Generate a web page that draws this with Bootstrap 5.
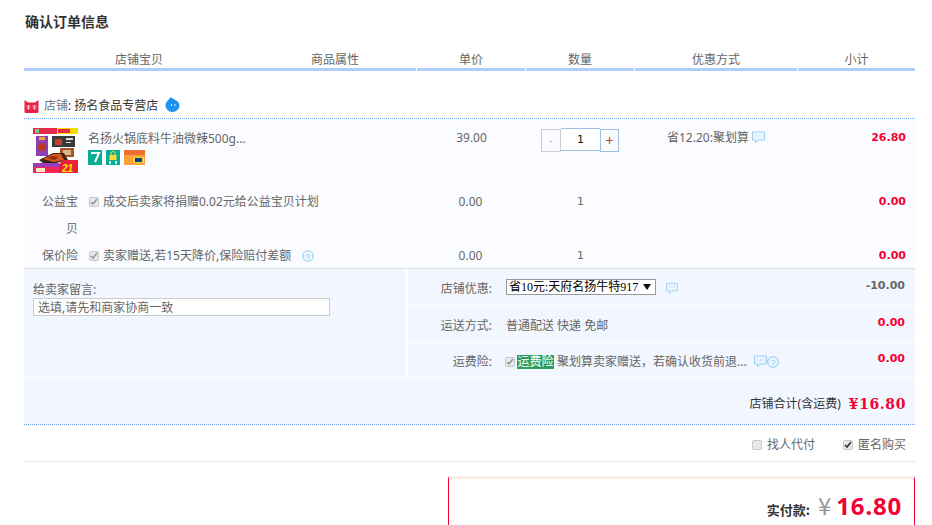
<!DOCTYPE html>
<html lang="zh-CN">
<head>
<meta charset="utf-8">
<title>确认订单信息</title>
<link rel="stylesheet" href="https://cdn.jsdelivr.net/npm/bootstrap@5.3.0/dist/css/bootstrap.min.css">
<style>
html,body{height:525px;overflow:hidden}
body{background:#fff;font-family:"Noto Sans","Noto Sans CJK SC",sans-serif;font-size:12px;line-height:18px;color:#666}
.page-wrap{width:891px;margin-left:24px}
.page-title{font-size:14px;font-weight:700;color:#333;line-height:20px;margin:11px 0 0 1px;font-family:"Noto Sans CJK SC",sans-serif}
.head-row{margin-top:20px;height:20px}
.head-cell{height:20px;line-height:17px;text-align:center;border-bottom:3px solid #aecdfa;margin-right:1px}
.c-item{width:392px}.c-price{width:108px}.c-qty{width:108px}.c-promo{width:162px}.c-sum{width:117px;margin-right:0}
.hi-a{width:230px;display:block}.hi-b{width:162px;display:block}
.shop-row{height:48px;padding-top:24px;border-bottom:1px dotted #6cb0f5;color:#333;line-height:21px}
.shop-cat{flex:none;margin-top:5px}
.shop-drop{flex:none;margin:2px 0 0 7px}
.shop-name{margin-left:5px}
.goods-area{background:#fbfcff;height:149px}
.goods-row{height:67px;border-bottom:1px solid #fff}
.thumb-cell{padding:9px 0 0 9px;width:64px;flex:none}
.goods-info{padding-top:11px;width:329px}
.badge-line{margin-top:2px;gap:4px}
.mid-text{padding-top:10px;text-align:center;width:109px}
.num-cell{padding-top:9px;text-align:center;width:109px}
.promo-cell{width:163px;padding:10px 0 0 32px}
.sum-text{padding:10px 9px 0 0;text-align:right;font:700 11px/18px "DejaVu Sans",sans-serif;color:#f40034}
.stepper{width:78px;margin-left:15px}
.step-btn{width:20px;height:23px;margin-top:1px;border:1px solid #ccc;text-align:center;line-height:21px;color:#bbb}
.step-plus{border-color:#9cc0e4;color:#a0522d;font-size:14px;width:19px}
.step-input{width:39px;height:23px;border:1px solid #9cc0e4;border-width:1px 0;text-align:center;color:#111;line-height:21px;background:#fff;font-family:"DejaVu Sans",sans-serif;font-size:11px}
.svc-row1,.svc-row2{padding-top:2px}
.svc-row1{height:54px}.svc-row2{height:27px}
.svc-label{width:54px;text-align:right;flex:none;line-height:27px;padding-left:16px}
.svc-row2 .svc-label{padding-left:0}
.svc-body{width:338px;padding-left:11px;line-height:27px}
.svc-num{line-height:27px;text-align:center;width:109px}
.svc-qty{padding-left:2px;font-family:"DejaVu Sans",sans-serif;font-size:11px}
.svc-gap{width:163px}
.svc-sum{line-height:27px;text-align:right;padding-right:9px;font:700 11px/27px "DejaVu Sans",sans-serif;color:#f40034}
.mini-check{appearance:none;-webkit-appearance:none;display:inline-block;width:10px;height:10px;margin:0 4px 0 0;vertical-align:-1px;background-color:#e9e9e9;border:1px solid #c8c8c8;border-radius:2px}
.mini-check:checked{background-repeat:no-repeat;background-position:center;background-size:8px 8px;background-image:url("data:image/svg+xml,%3Csvg xmlns='http://www.w3.org/2000/svg' viewBox='0 0 8 8'%3E%3Cpath d='M1 4l2 2 4-5' fill='none' stroke='%23999' stroke-width='1.600'/%3E%3C/svg%3E")}
.opts-row .mini-check:checked{background-image:url("data:image/svg+xml,%3Csvg xmlns='http://www.w3.org/2000/svg' viewBox='0 0 8 8'%3E%3Cpath d='M1 4l2 2 4-5' fill='none' stroke='%23333' stroke-width='1.600'/%3E%3C/svg%3E")}
.order-area{background:#f2f6ff;border-top:1px dotted #ccc;height:109px}
.note-col{width:384px;padding:12px 0 0 9px;border-right:2px solid #fff}
.note-label{line-height:17px}
.note-input{display:block;width:297px;height:18px;border:1px solid #ccc;font-size:12px;padding:0 4px;line-height:16px;background:#fff;border-radius:0;color:#666;outline:0}
.note-input::placeholder{color:#666;opacity:1}
.fee-col{flex:1}
.fee-row{height:37px;border-bottom:1px solid #fff;padding-top:11px}
.fee-row:last-child{border-bottom:0;height:34px;padding-top:10px}
.fee-label{width:84px;text-align:right;flex:none}
.fee-body{padding-left:14px;width:300px;flex:none;white-space:nowrap}
.fee-sum{flex:1;text-align:right;padding-right:10px;font:700 11px/18px "DejaVu Sans",sans-serif;color:#f40034;margin-top:-3px}
.fee-minus{color:#666}
.coupon-select{appearance:none;-webkit-appearance:none;width:150px;height:16px;margin-top:-1px;border:1px solid #999;font-size:12px;line-height:14px;padding:0 0 0 2px;color:#000;vertical-align:top;border-radius:0;font-family:"Liberation Serif","Noto Sans CJK SC",serif;background:#fff url("data:image/svg+xml,%3Csvg xmlns='http://www.w3.org/2000/svg' width='8' height='6'%3E%3Cpath d='M0 0h8L4 6z' fill='%23111'/%3E%3C/svg%3E") no-repeat right 4px center}
.coupon-tip{margin-left:10px}
.tag-green{background:#2f9e5c;color:#fff;display:inline-block;line-height:14px;width:37px;text-align:center}
.fee-check{margin-right:2px;margin-left:-1px}
.total-row{background:#f2f6ff;height:47px;margin-top:1px;padding:17px 9px 0 0;border-bottom:1px dotted #6c9fe6;color:#333}
.total-val{color:#f40034;font-weight:700;font-size:14px;letter-spacing:.6px;font-family:"DejaVu Serif",serif;margin-left:8px}
.opts-row{height:37px;border-bottom:1px dotted #d4d4d4;padding:11px 9px 0 0}
.opts-row .mini-check{margin-right:5px}
.opt-a{margin-right:28px}
.pay-box{width:467px;margin:14px 0 0 auto;height:60px;border-left:1px solid #f40034;border-right:1px solid #f40034;border-top:3px solid #fdeee6;padding:17px 12px 0 0;text-align:right}
.pay-label{font-weight:700;font-size:13px;color:#333;margin-right:8px;font-family:"Noto Sans CJK SC",sans-serif}
.pay-yen{color:#999;font-size:24px;margin-right:5px;font-family:"Noto Sans CJK SC",sans-serif;font-weight:400}
.pay-num{color:#f40034;font-size:24px;font-weight:700;letter-spacing:.8px;font-family:"Noto Sans",sans-serif}
.ico{vertical-align:-2px}
</style>
</head>
<body>
<div class="page-wrap">
  <div class="page-title">确认订单信息</div>

  <div class="head-row d-flex">
    <div class="head-cell c-item d-flex"><span class="hi-a">店铺宝贝</span><span class="hi-b">商品属性</span></div>
    <div class="head-cell c-price">单价</div>
    <div class="head-cell c-qty">数量</div>
    <div class="head-cell c-promo">优惠方式</div>
    <div class="head-cell c-sum">小计</div>
  </div>

  <div class="shop-row d-flex align-items-start">
    <svg class="shop-cat" width="15" height="13" viewBox="0 0 15 13"><path d="M.5 0L4 2.500h7L14.500 0v11.500A1.500 1.500 0 0 1 13 13H2A1.500 1.500 0 0 1 .5 11.500z" fill="#ee1f45"/><path d="M2.500 6h4M4.500 5v5M8.500 6h4M10.500 5v5M2.500 8h4M8.500 8h4" stroke="#ffd6de" stroke-width=".8"/></svg>
    <span class="shop-name"><span class="text-secondary">店铺</span>: 扬名食品专营店</span>
    <svg class="shop-drop" width="15" height="15" viewBox="0 0 15 15"><path d="M6 0c1 2.500 8.500 3 8.500 8.500A7 6.500 0 0 1 .5 8.500C.5 4.500 4 3 6 0z" fill="#1d93ee"/><path d="M6.500 7v2M10 7v2" stroke="#cfe8ff"/></svg>
  </div>

  <div class="goods-area">
    <div class="goods-row d-flex">
      <div class="thumb-cell">
        <svg class="d-block" width="45" height="45" viewBox="0 0 45 45">
          <rect width="45" height="45" fill="#fff"/>
          <rect width="45" height="6" fill="#e8294a"/><rect x="24" width="21" height="6" fill="#f5dd00"/><rect x="25" y="1" width="12" height="4" fill="#e8294a"/><rect x="2" y="1" width="4" height="4" fill="#7ec87e"/>
          <rect x="3" y="8" width="12" height="20" fill="#8e3fb0"/><rect x="6" y="9" width="6" height="3" fill="#e8a83a"/><circle cx="9" cy="19" r="4" fill="#b8362a"/>
          <rect x="19" y="8" width="23" height="11" fill="#3a3a3a"/><rect x="22" y="11" width="7" height="6" fill="#c8402a"/><rect x="33" y="10" width="7" height="2" fill="#ddd"/><rect x="33" y="14" width="5" height="1" fill="#ddd"/>
          <rect x="27" y="20" width="14" height="9" fill="#a9522a"/><rect x="30" y="22" width="8" height="5" fill="#d9b98a"/>
          <path d="M6 32l14-7h11l4 7-12 3H10z" fill="#3a2418"/><path d="M10 31l10-5 8 0 3 6-10 2z" fill="#d6561c"/><path d="M14 30l6-2 5 1-3 3z" fill="#8c2f10"/>
          <rect y="35" width="26" height="4" fill="#9a3cc0"/><rect y="39" width="26" height="6" fill="#f0285a"/><rect x="3" y="40" width="9" height="4" fill="#ffe9c0"/>
          <path d="M30 32h15v13H26v-9z" fill="#e8203a"/><text x="29" y="44" font-size="10" font-weight="700" font-style="italic" fill="#ffe600" font-family="Liberation Sans">21</text>
        </svg>
      </div>
      <div class="goods-info">
        <div>名扬火锅底料牛油微辣500g...</div>
        <div class="d-flex badge-line">
          <svg width="14" height="15" viewBox="0 0 14 15"><rect width="14" height="15" fill="#08ae94"/><path d="M3 3h8L7 12" fill="none" stroke="#fff" stroke-width="2"/></svg>
          <svg width="14" height="15" viewBox="0 0 14 15"><rect width="14" height="15" fill="#08ae94"/><path d="M3.500 5h7v5h-7z" fill="#f3dd3c"/><path d="M5 5V3.500a2 2 0 0 1 4 0V5" fill="none" stroke="#f3dd3c"/><path d="M4 11v3M10 11v3" stroke="#fff" stroke-width="1.500"/></svg>
          <svg width="21" height="15" viewBox="0 0 21 15"><rect width="21" height="15" rx="1" fill="#f9a23a"/><rect width="21" height="5" fill="#ee7030"/><rect x="9" y="7" width="11" height="6" fill="#f6d340"/><rect x="11" y="8" width="7" height="4" fill="#143a8c"/></svg>
        </div>
      </div>
      <div class="mid-text">39.00</div>
      <div class="num-cell"><div class="stepper d-flex">
        <div class="step-btn">-</div><div class="step-input">1</div><div class="step-btn step-plus">+</div>
      </div></div>
      <div class="promo-cell">省12.20:聚划算
        <svg class="ico" width="13" height="13" viewBox="0 0 13 13"><path d="M.5 1h12v8H6l-2.500 3V9H.5z" fill="#eaf5ff" stroke="#9fd0f2"/><path d="M3 5h1M6 5h1M9 5h1" stroke="#9fd0f2"/></svg>
      </div>
      <div class="sum-text flex-grow-1">26.80</div>
    </div>

    <div class="svc-row1 d-flex">
      <div class="svc-label">公益宝贝</div>
      <div class="svc-body"><input class="mini-check" type="checkbox" checked disabled>成交后卖家将捐赠0.02元给公益宝贝计划</div>
      <div class="svc-num">0.00</div>
      <div class="svc-num svc-qty">1</div>
      <div class="svc-gap"></div>
      <div class="svc-sum flex-grow-1">0.00</div>
    </div>
    <div class="svc-row2 d-flex">
      <div class="svc-label">保价险</div>
      <div class="svc-body"><input class="mini-check" type="checkbox" checked disabled>卖家赠送,若15天降价,保险赔付差额
        <svg class="ico ms-2" width="12" height="12" viewBox="0 0 12 12"><circle cx="6" cy="6" r="5.300" fill="#eef7ff" stroke="#8ccaf2"/><text x="6" y="9" text-anchor="middle" font-size="8" fill="#6db8ea" font-family="Liberation Sans">?</text></svg>
      </div>
      <div class="svc-num">0.00</div>
      <div class="svc-num svc-qty">1</div>
      <div class="svc-gap"></div>
      <div class="svc-sum flex-grow-1">0.00</div>
    </div>
  </div>

  <div class="order-area d-flex">
    <div class="note-col">
      <div class="note-label">给卖家留言:</div>
      <input class="note-input" type="text" placeholder="选填,请先和商家协商一致">
    </div>
    <div class="fee-col">
      <div class="fee-row d-flex">
        <div class="fee-label">店铺优惠:</div>
        <div class="fee-body">
          <select class="coupon-select"><option>省10元:天府名扬牛特917</option></select><svg class="ico coupon-tip" width="12" height="13" viewBox="0 0 13 13"><path d="M.5 1h12v8H6l-2.500 3V9H.5z" fill="#eaf5ff" stroke="#9fd0f2"/><path d="M3 5h1M6 5h1M9 5h1" stroke="#9fd0f2"/></svg>
        </div>
        <div class="fee-sum fee-minus">-10.00</div>
      </div>
      <div class="fee-row d-flex">
        <div class="fee-label">运送方式:</div>
        <div class="fee-body">普通配送 快递 免邮</div>
        <div class="fee-sum">0.00</div>
      </div>
      <div class="fee-row d-flex">
        <div class="fee-label">运费险:</div>
        <div class="fee-body"><input class="mini-check fee-check" type="checkbox" checked disabled><span class="tag-green">运费险</span> 聚划算卖家赠送，若确认收货前退...
          <svg class="ico ms-1" width="13" height="13" viewBox="0 0 13 13"><path d="M.5 1h12v8H6l-2.500 3V9H.5z" fill="#eaf5ff" stroke="#9fd0f2"/><path d="M3 5h1M6 5h1M9 5h1" stroke="#9fd0f2"/></svg><svg class="ico" width="12" height="12" viewBox="0 0 12 12"><circle cx="6" cy="6" r="5.300" fill="#eef7ff" stroke="#8ccaf2"/><text x="6" y="9" text-anchor="middle" font-size="8" fill="#6db8ea" font-family="Liberation Sans">?</text></svg>
        </div>
        <div class="fee-sum">0.00</div>
      </div>
    </div>
  </div>

  <div class="total-row d-flex justify-content-end">店铺合计(含运费)<span class="total-val">¥16.80</span></div>

  <div class="opts-row d-flex justify-content-end">
    <label class="opt-a"><input class="mini-check" type="checkbox">找人代付</label>
    <label><input class="mini-check" type="checkbox" checked>匿名购买</label>
  </div>

  <div class="pay-box"><span class="pay-label">实付款:</span><span class="pay-yen">¥</span><span class="pay-num">16.80</span></div>
</div>
</body>
</html>
